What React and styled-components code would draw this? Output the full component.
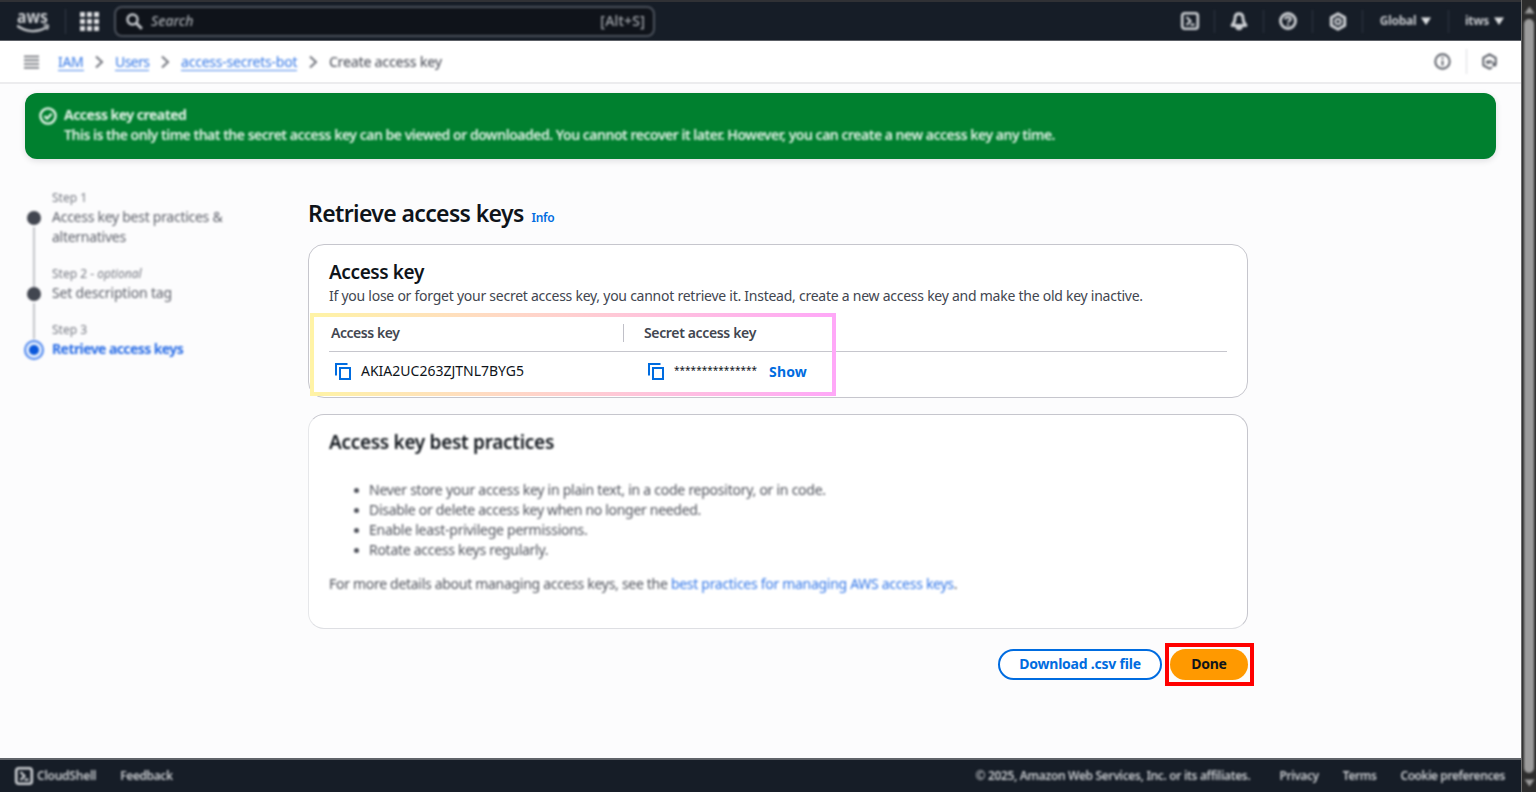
import React from "react";
import styled, { createGlobalStyle, css } from "styled-components";

const Global = createGlobalStyle`
  * { box-sizing: border-box; }
  html, body { margin: 0; padding: 0; overflow: hidden; }
  body {
    background: #fcfcfd;
    font-family: "Noto Sans", "Open Sans", sans-serif;
    font-size: 14px;
    line-height: 20px;
    color: #0f141a;
  }
  h1, h2, p, ul, ol { margin: 0; padding: 0; }
  button, input { font-family: inherit; }
  svg { overflow: visible; }
`;

const soften = css`
  filter: blur(1px);
`;

const Page = styled.div`
  display: grid;
  grid-template-columns: 1fr 15px;
  width: 1536px;
  height: 792px;
  overflow: hidden;
`;

const Shell = styled.div`
  display: flex;
  flex-direction: column;
  min-width: 0;
`;

const Label = styled.span`
  display: inline-block;
  white-space: nowrap;
  letter-spacing: ${(p) => p.$track || 0}px;
`;

/* Top navigation */

const TopBar = styled.header`
  display: flex;
  align-items: center;
  height: 41px;
  padding-left: 16px;
  background: #161d27;
  border-top: 2px solid #303135;
  border-bottom: 1px solid #5c6066;
  color: #c3c6cb;
`;

const LogoCell = styled.div`
  display: flex;
  width: 50px;
  height: 25px;
  border-right: 1px solid #363d48;
  ${soften}
`;

const LogoWord = styled.text`
  font-size: 17px;
  font-weight: 700;
`;

const AppsCell = styled.div`
  display: flex;
  width: 48px;
  padding-left: 14px;
  ${soften}
`;

const SearchBox = styled.div`
  display: flex;
  align-items: center;
  width: 541px;
  height: 31px;
  padding: 0 8px 0 10px;
  border: 2px solid #4b515b;
  border-radius: 8px;
  background: #0f131a;
  font-weight: 500;
  ${soften}
`;

const SearchHint = styled.em`
  flex: 1;
  margin-left: 8px;
  color: #a4a8ae;
`;

const Shortcut = styled.span`
  color: #a4a8ae;
  letter-spacing: 0.2px;
`;

const Tools = styled.div`
  display: flex;
  align-items: center;
  height: 23px;
  margin-left: auto;
  padding-right: 1px;
  ${soften}
`;

const ToolCell = styled.div`
  display: flex;
  align-items: center;
  justify-content: center;
  gap: 5px;
  width: ${(p) => p.$w}px;
  height: 23px;
  border-right: ${(p) => (p.$last ? "0" : "1px solid #303743")};
  font-size: 12px;
  font-weight: 700;
`;

/* Breadcrumb bar */

const CrumbBar = styled.nav`
  display: flex;
  align-items: center;
  height: 43px;
  padding: 0 23px 0 24px;
  background: #fff;
  border-bottom: 2px solid #ececee;
`;

const Crumbs = styled.div`
  display: flex;
  align-items: center;
  margin-left: 19px;
  padding-top: 1px;
  color: #5c5f68;
  ${soften}
`;

const CrumbLink = styled.a`
  height: 17px;
  line-height: 16px;
  border-bottom: 1px solid #4a86ea;
  color: #3578e6;
  letter-spacing: ${(p) => p.$track || 0}px;
`;

const CrumbHere = styled.span`
  line-height: 16px;
  font-weight: 500;
  letter-spacing: ${(p) => p.$track || 0}px;
`;

const CrumbArrow = styled.svg`
  margin: 0 11px 0 10.6px;
`;

const PanelTools = styled.div`
  display: flex;
  align-items: center;
  height: 25px;
  margin-left: auto;
  ${soften}
`;

const PanelRule = styled.span`
  width: 1px;
  height: 25px;
  margin: 0 14px 0 15px;
  background: #dcdde0;
`;

const SoftIcon = styled.span`
  display: flex;
  ${soften}
`;

/* Success banner */

const Banner = styled.section`
  display: flex;
  gap: 7px;
  height: 66px;
  margin: 9px 25px 0;
  padding: 12px 14px;
  border-radius: 12px;
  background: #00802f;
  color: #e4f3e8;
  box-shadow: 0 2px 6px rgba(0, 7, 22, 0.12);
  filter: blur(0.7px);
`;

const BannerIcon = styled.span`
  display: flex;
  padding-top: 2px;
  filter: blur(0.8px);
`;

const BannerText = styled.div`
  display: flex;
  flex-direction: column;
  font-weight: 600;
  filter: blur(0.85px);
`;

const Strong = styled(Label)`
  font-weight: 700;
`;

/* Content */

const Main = styled.main`
  display: flex;
  flex: 1;
  min-height: 0;
  padding: 29px 0 0 24px;
`;

const Wizard = styled.ol`
  display: flex;
  flex-direction: column;
  width: 284px;
  list-style: none;
  ${soften}
`;

const Step = styled.li`
  display: grid;
  grid-template-columns: 20px 1fr;
  column-gap: 8px;
  height: ${(p) => p.$h}px;
`;

const Rail = styled.div`
  display: flex;
  flex-direction: column;
  align-items: center;
  padding-top: ${(p) => (p.$current ? 20 : 23)}px;
`;

const Dot = styled.span`
  flex: none;
  width: 14px;
  height: 14px;
  border-radius: 50%;
  background: #424650;
`;

const CurrentDot = styled.span`
  display: flex;
  flex: none;
  align-items: center;
  justify-content: center;
  width: 20px;
  height: 20px;
  border: 2px solid #4a84ee;
  border-radius: 50%;
  background: #e6effd;

  &::after {
    content: "";
    width: 10px;
    height: 10px;
    border-radius: 50%;
    background: #0a58dc;
  }
`;

const Line = styled.span`
  width: 2px;
  height: ${(p) => p.$h}px;
  margin-top: 2px;
  background: #c3c5cb;
`;

const StepNo = styled.div`
  height: 19px;
  padding-top: 2px;
  font-size: 12px;
  line-height: 16px;
  color: #767982;
`;

const StepName = styled.div`
  color: ${(p) => (p.$current ? "#2b6ee6" : "#5f626b")};
  font-weight: ${(p) => (p.$current ? 700 : 400)};
  letter-spacing: ${(p) => p.$track || 0}px;
  white-space: pre-line;
`;

const Content = styled.div`
  display: flex;
  flex-direction: column;
  width: 940px;
`;

const TitleRow = styled.div`
  display: flex;
  align-items: baseline;
  gap: 8px;
  height: 56px;
  padding-top: 10px;
`;

const Title = styled.h1`
  font-size: 23px;
  font-weight: 600;
  line-height: 30px;
  letter-spacing: -0.63px;
  white-space: nowrap;
`;

const InfoLink = styled.a`
  color: #006ce0;
  font-size: 12px;
  font-weight: 600;
  letter-spacing: -0.3px;
`;

const Card = styled.section`
  height: ${(p) => p.$h}px;
  margin-bottom: 16px;
  padding: 15px 20px 0;
  border: 1px solid #c6c6cd;
  border-bottom-color: ${(p) => (p.$faded ? "#dedfe3" : "#c6c6cd")};
  border-left-color: ${(p) => (p.$faded ? "#e6e7ea" : "#c6c6cd")};
  border-radius: 16px;
  background: #fff;
`;

const CardTitle = styled.h2`
  font-size: 19px;
  font-weight: 600;
  line-height: 24px;
  letter-spacing: ${(p) => p.$track || 0}px;
`;

const CardNote = styled.p`
  height: 30px;
  padding-top: 2px;
  color: #424650;
`;

const KeyTable = styled.div`
  position: relative;
  display: grid;
  grid-template-columns: 295px 1fr;
`;

const HeadCell = styled.div`
  display: flex;
  align-items: center;
  height: 38px;
  padding-left: ${(p) => p.$left}px;
  border-bottom: 1px solid #c6c6cd;
  color: #424650;
  font-weight: 600;
`;

const HeadRule = styled.span`
  width: 1.5px;
  height: 18px;
  margin-left: auto;
  background: #c0c0c8;
`;

const DataCell = styled.div`
  display: flex;
  align-items: center;
  height: 38px;
  padding-left: ${(p) => p.$left}px;
`;

const KeyValue = styled(Label)`
  margin-left: 10px;
`;

const MaskedValue = styled(KeyValue)`
  padding-bottom: 2px;
  font-size: 10px;
`;

const ShowButton = styled.button`
  margin-left: 12px;
  padding: 1px 0 0;
  border: 0;
  background: none;
  color: #006ce0;
  font-size: 14px;
  font-weight: 700;
  letter-spacing: 0.15px;
`;

const Highlight = styled.div`
  position: absolute;
  top: -1px;
  left: -19px;
  width: 526px;
  height: 83px;
  border: 4px solid;
  border-image: linear-gradient(90deg, #fff3a6, #ffcfd0 50%, #ffa8f8) 1;
`;

const Practices = styled.div`
  ${soften}
`;

const Tips = styled.ul`
  margin: 26px 0 14px;
  padding-left: 40px;
  color: #50535c;
  list-style: none;
`;

const Tip = styled.li`
  display: flex;
  align-items: center;
  letter-spacing: ${(p) => p.$track}px;

  &::before {
    content: "";
    width: 5px;
    height: 5px;
    margin: 1px 10px 0 -15px;
    border-radius: 50%;
    background: #50535c;
  }
`;

const More = styled.p`
  color: #50535c;
  white-space: nowrap;
  letter-spacing: -0.295px;
`;

const MoreLink = styled.a`
  color: #3478e8;
`;

const Actions = styled.div`
  display: flex;
  align-items: flex-start;
  justify-content: flex-end;
  gap: 3px;
  height: 43px;
  margin: -2px -6px 0 0;
`;

const PillButton = styled.button`
  height: 31px;
  padding: 0 0 1px;
  border-radius: 20px;
  font-size: 14px;
  font-weight: 700;
  line-height: 20px;
`;

const DownloadButton = styled(PillButton)`
  width: 164px;
  margin-top: 6px;
  border: 2px solid #006ce0;
  background: #fff;
  color: #006ce0;
  letter-spacing: -0.22px;
`;

const DoneButton = styled(PillButton)`
  width: 78px;
  border: 0;
  background: #ff9900;
  color: #0f141a;
  letter-spacing: -0.3px;
`;

const DoneFrame = styled.div`
  display: flex;
  align-items: center;
  justify-content: flex-start;
  width: 89px;
  height: 43px;
  padding-left: 1px;
  border: 4px solid #ff0000;
`;

/* Footer */

const Footer = styled.footer`
  display: flex;
  flex: none;
  align-items: center;
  height: 35px;
  padding: 0 16px 1px 15px;
  border-top: 2px solid #60646a;
  border-bottom: 1px solid #4d5159;
  background: #161d27;
  color: #c9ccd0;
  font-size: 12px;
  font-weight: 600;
`;

const FooterGroup = styled.div`
  display: flex;
  align-items: center;
  gap: 24px;
  margin-left: ${(p) => (p.$end ? "auto" : 0)};
  ${soften}
`;

const Copyright = styled(Label)`
  margin-right: 5px;
`;

const ShellLink = styled.span`
  display: flex;
  align-items: center;
  gap: 4px;
`;

/* Scrollbar */

const ScrollTrack = styled.div`
  display: flex;
  flex-direction: column;
  align-items: center;
  padding: 6px 0;
  border-left: 1px solid #6d6d6d;
  background: #2c2c2c;
`;

const ScrollThumb = styled.div`
  width: 10px;
  height: 754px;
  margin: 5px 0 6px;
  border-radius: 5px;
  background: #9c9c9c;
  filter: blur(0.8px);
`;

const ScrollArrow = styled.svg`
  flex: none;
  filter: blur(0.8px);
`;

const ArrowSvg = ({ down }) => (
  <ScrollArrow width="11" height="8" viewBox="0 0 11 8">
    <path d={down ? "M0.5 0.5h10L5.5 7.5z" : "M0.5 7.5h10L5.5 0.5z"} fill="#9c9c9c" />
  </ScrollArrow>
);

const AwsLogo = () => (
  <svg width="34" height="25" viewBox="0 0 34 25" fill="none" stroke="#c9ccd0">
    <LogoWord x="1" y="13.5" fill="#c9ccd0" stroke="none" textLength="31" lengthAdjust="spacingAndGlyphs">aws</LogoWord>
    <path d="M2 17.300c8 6 20 6.300 28 1.300" strokeWidth="2.400" strokeLinecap="round" />
    <path d="M27.500 16.300c2-.8 4.500-.8 4.800.3.1 1.500-.6 3-1.600 4" strokeWidth="1.600" />
  </svg>
);

const GridIcon = () => (
  <svg width="19" height="19" viewBox="0 0 19 19" fill="#dcdee1">
    {[0, 7, 14].map((y) => [0, 7, 14].map((x) => <rect key={`${x}-${y}`} x={x} y={y} width="5" height="5" />))}
  </svg>
);

const SearchIcon = () => (
  <svg width="17" height="17" viewBox="0 0 17 17" fill="none" stroke="#c3c6cb">
    <circle cx="6.500" cy="6.500" r="5" strokeWidth="2.500" />
    <path d="M10.300 10.300l5.500 5.500" strokeWidth="3" />
  </svg>
);

const TerminalIcon = () => (
  <svg width="18" height="18" viewBox="0 0 18 18" fill="none" stroke="#cdd0d4" strokeWidth="2.600">
    <rect x="1.200" y="1.200" width="15.600" height="15.600" rx="2.500" />
    <path d="M5.500 5l4 4-4 4M9.500 12.700h4" strokeWidth="2.200" />
  </svg>
);

const BellIcon = () => (
  <svg width="18" height="19" viewBox="0 0 18 19" fill="none" stroke="#cdd0d4" strokeWidth="2.900">
    <path d="M9 1.800c-3 0-4 2-4 4.500 0 3.500-.7 4.700-3 7.200h14c-2.300-2.500-3-3.700-3-7.200 0-2.500-1-4.500-4-4.500z" strokeLinejoin="round" />
    <path d="M6 14.500a3 3 0 0 0 6 0z" fill="#cdd0d4" strokeWidth="1.500" />
  </svg>
);

const HelpIcon = () => (
  <svg width="18" height="18" viewBox="0 0 18 18" fill="none" stroke="#cdd0d4" strokeWidth="2.800">
    <circle cx="9" cy="9" r="7.500" />
    <path d="M6.300 7.500c0-3.200 5.400-3 5.400-.2 0 1.700-2.700 1.700-2.700 3.200M9 11.800v2" strokeWidth="2.200" />
  </svg>
);

const GearIcon = () => (
  <svg width="18" height="19" viewBox="0 0 18 19" fill="none" stroke="#cdd0d4">
    <path d="M9 1.800l6.700 3.800v7.800L9 17.200l-6.700-3.800V5.600z" strokeWidth="3" strokeLinejoin="round" />
    <circle cx="9" cy="9.500" r="2.700" strokeWidth="2.200" />
  </svg>
);

const Caret = () => (
  <svg width="10" height="8" viewBox="0 0 10 8" fill="#dfe1e4">
    <path d="M0 .5h10L5 8z" />
  </svg>
);

const MenuIcon = () => (
  <svg width="15" height="14" viewBox="0 0 15 14" stroke="#5f626a">
    <path d="M0 1.500h15M0 5.200h15M0 9h15M0 12.700h15" strokeWidth="1.600" />
  </svg>
);

const Chevron = () => (
  <CrumbArrow width="10" height="12" viewBox="0 0 10 12" fill="none" stroke="#74777f" strokeWidth="2">
    <path d="M2 0.500l6 5.500-6 5.500" />
  </CrumbArrow>
);

const InfoIcon = () => (
  <svg width="17" height="17" viewBox="0 0 17 17" fill="none" stroke="#565a63">
    <circle cx="8.500" cy="8.500" r="7.200" strokeWidth="1.900" />
    <path d="M8.500 7.500v5M8.500 4.300v1.800" strokeWidth="1.900" />
  </svg>
);

const HexIcon = () => (
  <svg width="17" height="17" viewBox="0 0 17 17" fill="none" stroke="#565a63" strokeWidth="1.900">
    <path d="M11 14.500l-2.500 1.200-6.200-3.400v-7.400l6.200-3.500 6.200 3.500v6" strokeLinejoin="round" />
    <path d="M6 7.500v2.500h3.500M6 9.500c1.500-2 3.500-2 5-.5l3.500 4" strokeWidth="1.600" />
    <path d="M10.500 13.200h4.800v-4.500z" fill="#565a63" stroke="none" />
  </svg>
);

const CheckIcon = () => (
  <svg width="18" height="18" viewBox="0 0 18 18" fill="none" stroke="#e9f6ec" strokeWidth="2.300">
    <circle cx="9" cy="9" r="7.600" />
    <path d="M5.500 9.200l2.600 2.500 4.500-5" />
  </svg>
);

const CopyIcon = () => (
  <svg width="16" height="17" viewBox="0 0 16 17" fill="none" stroke="#006ce0" strokeWidth="2">
    <path d="M1 12.500V1h11.500" />
    <rect x="5" y="5" width="10" height="11" />
  </svg>
);

const tips = [
  { text: "Never store your access key in plain text, in a code repository, or in code.", track: -0.255 },
  { text: "Disable or delete access key when no longer needed.", track: -0.3 },
  { text: "Enable least-privilege permissions.", track: -0.26 },
  { text: "Rotate access keys regularly.", track: -0.28 },
];

export default function App() {
  return (
    <Page>
      <Global />
      <Shell>
        <TopBar>
          <LogoCell><AwsLogo /></LogoCell>
          <AppsCell><GridIcon /></AppsCell>
          <SearchBox>
            <SearchIcon />
            <SearchHint>Search</SearchHint>
            <Shortcut>[Alt+S]</Shortcut>
          </SearchBox>
          <Tools>
            <ToolCell $w={50}><TerminalIcon /></ToolCell>
            <ToolCell $w={49}><BellIcon /></ToolCell>
            <ToolCell $w={49}><HelpIcon /></ToolCell>
            <ToolCell $w={50}><GearIcon /></ToolCell>
            <ToolCell $w={86}><Label $track={-0.3}>Global</Label><Caret /></ToolCell>
            <ToolCell $w={71} $last><Label $track={-0.3}>itws</Label><Caret /></ToolCell>
          </Tools>
        </TopBar>

        <CrumbBar>
          <SoftIcon><MenuIcon /></SoftIcon>
          <Crumbs>
            <CrumbLink $track={-0.3}>IAM</CrumbLink>
            <Chevron />
            <CrumbLink $track={-0.6}>Users</CrumbLink>
            <Chevron />
            <CrumbLink $track={-0.22}>access-secrets-bot</CrumbLink>
            <Chevron />
            <CrumbHere $track={-0.27}>Create access key</CrumbHere>
          </Crumbs>
          <PanelTools>
            <InfoIcon />
            <PanelRule />
            <HexIcon />
          </PanelTools>
        </CrumbBar>

        <Banner>
          <BannerIcon><CheckIcon /></BannerIcon>
          <BannerText>
            <Strong $track={-0.52}>Access key created</Strong>
            <Label $track={-0.485}>This is the only time that the secret access key can be viewed or downloaded. You cannot recover it later. However, you can create a new access key any time.</Label>
          </BannerText>
        </Banner>

        <Main>
          <Wizard>
            <Step $h={76}>
              <Rail><Dot /><Line $h={60} /></Rail>
              <div>
                <StepNo>Step 1</StepNo>
                <StepName $track={-0.27}>{"Access key best practices &\nalternatives"}</StepName>
              </div>
            </Step>
            <Step $h={56}>
              <Rail><Dot /><Line $h={36} /></Rail>
              <div>
                <StepNo>Step 2 - <em>optional</em></StepNo>
                <StepName $track={-0.17}>Set description tag</StepName>
              </div>
            </Step>
            <Step $h={56}>
              <Rail $current><CurrentDot /></Rail>
              <div>
                <StepNo>Step 3</StepNo>
                <StepName $current $track={-0.58}>Retrieve access keys</StepName>
              </div>
            </Step>
          </Wizard>

          <Content>
            <TitleRow>
              <Title>Retrieve access keys</Title>
              <InfoLink>Info</InfoLink>
            </TitleRow>

            <Card $h={154}>
              <CardTitle $track={-0.4}>Access key</CardTitle>
              <CardNote><Label $track={-0.252}>If you lose or forget your secret access key, you cannot retrieve it. Instead, create a new access key and make the old key inactive.</Label></CardNote>
              <KeyTable>
                <HeadCell $left={2}><Label $track={-0.45}>Access key</Label><HeadRule /></HeadCell>
                <HeadCell $left={20}><Label $track={-0.35}>Secret access key</Label></HeadCell>
                <DataCell $left={6}><CopyIcon /><KeyValue>AKIA2UC263ZJTNL7BYG5</KeyValue></DataCell>
                <DataCell $left={24}><CopyIcon /><MaskedValue $track={0.03}>***************</MaskedValue><ShowButton>Show</ShowButton></DataCell>
                <Highlight />
              </KeyTable>
            </Card>

            <Card $h={215} $faded>
              <Practices>
                <CardTitle $track={-0.3}>Access key best practices</CardTitle>
                <Tips>
                  {tips.map((t) => <Tip key={t.text} $track={t.track}>{t.text}</Tip>)}
                </Tips>
                <More>For more details about managing access keys, see the <MoreLink>best practices for managing AWS access keys</MoreLink>.</More>
              </Practices>
            </Card>

            <Actions>
              <DownloadButton>Download .csv file</DownloadButton>
              <DoneFrame><DoneButton>Done</DoneButton></DoneFrame>
            </Actions>
          </Content>
        </Main>

        <Footer>
          <FooterGroup>
            <ShellLink><TerminalIcon /><Label $track={-0.25}>CloudShell</Label></ShellLink>
            <Label $track={-0.4}>Feedback</Label>
          </FooterGroup>
          <FooterGroup $end>
            <Copyright $track={-0.34}>© 2025, Amazon Web Services, Inc. or its affiliates.</Copyright>
            <Label $track={-0.4}>Privacy</Label>
            <Label $track={-0.4}>Terms</Label>
            <Label $track={-0.45}>Cookie preferences</Label>
          </FooterGroup>
        </Footer>
      </Shell>
      <ScrollTrack>
        <ArrowSvg />
        <ScrollThumb />
        <ArrowSvg down />
      </ScrollTrack>
    </Page>
  );
}
